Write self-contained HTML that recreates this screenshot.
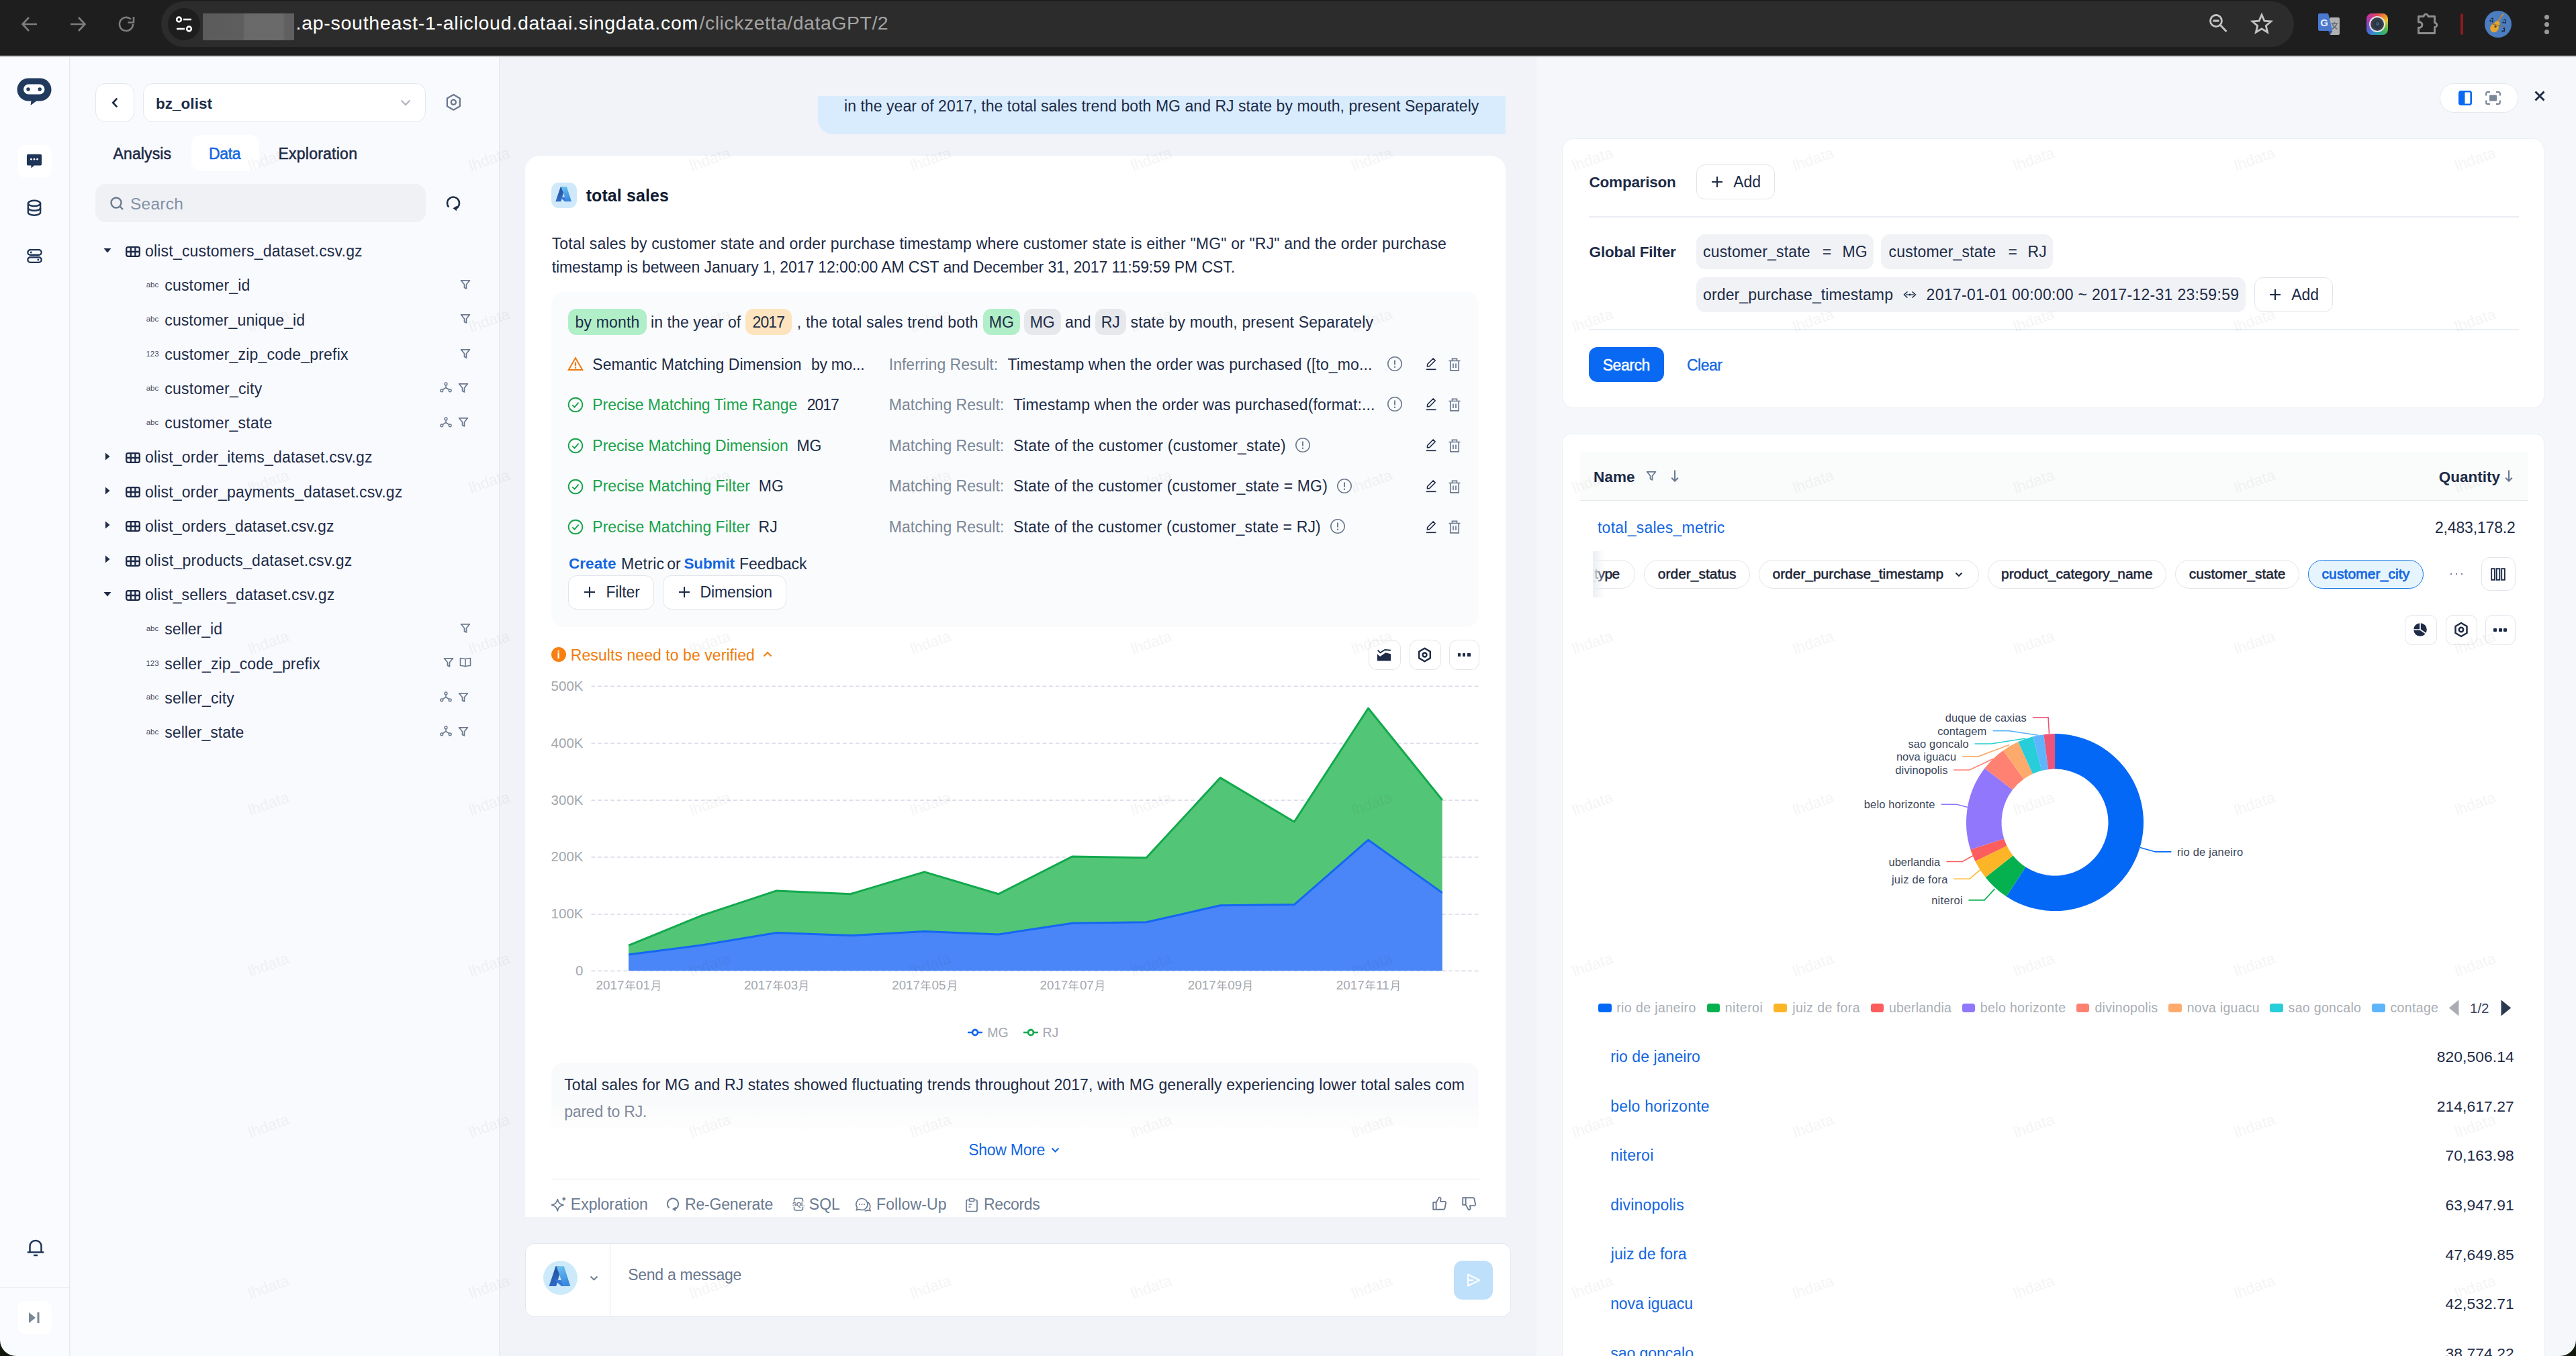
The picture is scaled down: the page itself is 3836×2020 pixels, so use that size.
<!DOCTYPE html>
<html><head><meta charset="utf-8"><title>dataGPT</title><style>
html,body{margin:0;padding:0;background:#f1f3f8;}
body{width:3836px;height:2020px;overflow:hidden;position:relative;font-family:"Liberation Sans",sans-serif;}
.t{position:absolute;white-space:nowrap;line-height:1;font-family:"Liberation Sans",sans-serif;}
.b{position:absolute;box-sizing:border-box;display:block;}
</style></head><body>
<div class="b" style="left:0.0px;top:83.0px;width:104.0px;height:1937.0px;background:#fafbfe;"></div>
<div class="b" style="left:103.2px;top:83.0px;width:1.2px;height:1937.0px;background:#e6e9ef;"></div>
<div class="b" style="left:104.5px;top:83.0px;width:638.5px;height:1937.0px;background:#f9fafe;"></div>
<div class="b" style="left:743.0px;top:83.0px;width:1.2px;height:1937.0px;background:#e4e7ec;"></div>
<div class="b" style="left:744.5px;top:83.0px;width:1543.5px;height:1937.0px;background:#f1f3f8;"></div>
<div class="b" style="left:2288.0px;top:83.0px;width:1548.0px;height:1937.0px;background:#f5f7fa;"></div>
<div class="b" style="left:0.0px;top:0.0px;width:3836.0px;height:84.0px;background:#1e1e1e;"></div>
<div class="b" style="left:0.0px;top:81.6px;width:3836.0px;height:2.4px;background:#4a4a4a;"></div>
<div class="b" style="left:0.0px;top:84.0px;width:3836.0px;height:1.2px;background:#ffffff;"></div>
<div class="b" style="left:240.0px;top:2.0px;width:3175.5px;height:68.0px;background:#2c2c2c;border-radius:34px;"></div>
<svg class="b" style="left:30.0px;top:22.0px;" width="28" height="28" viewBox="0 0 28 28"><path d="M25 14H4M13 4L3.5 14 13 24" fill="none" stroke="#7d7d7d" stroke-width="2.6"/></svg>
<svg class="b" style="left:102.0px;top:22.0px;" width="28" height="28" viewBox="0 0 28 28"><path d="M3 14H24M15 4l9.5 10L15 24" fill="none" stroke="#7d7d7d" stroke-width="2.6"/></svg>
<svg class="b" style="left:173.0px;top:21.0px;" width="30" height="30" viewBox="0 0 30 30"><path d="M25 15a10 10 0 1 1-3.2-7.4" fill="none" stroke="#7d7d7d" stroke-width="2.6"/><path d="M26 4v8.5h-8.5" fill="none" stroke="#7d7d7d" stroke-width="2.6"/></svg>
<div class="b" style="left:250.0px;top:12.0px;width:48.0px;height:48.0px;background:#1e1e1e;border-radius:24px;"></div>
<svg class="b" style="left:260.0px;top:22.0px;" width="28" height="28" viewBox="0 0 28 28"><g fill="none" stroke="#fff" stroke-width="2.6"><circle cx="6.5" cy="7" r="3.4"/><path d="M13 7h12"/><circle cx="21.5" cy="21" r="3.4"/><path d="M3 21h12"/></g></svg>
<div class="b" style="left:302.0px;top:20.0px;width:136.0px;height:40.0px;background:linear-gradient(90deg,#5b5b5b 0%,#5e5e5e 44%,#696969 46%,#6a6a6a 88%,#606060 90%,#5f5f5f 100%);"></div>
<span class="t" style="left:440.5px;top:19.7px;font-size:28.5px;color:#ffffff;letter-spacing:0.734px;">.ap-southeast-1-alicloud.dataai.singdata.com</span>
<span class="t" style="left:1041.5px;top:19.7px;font-size:28.5px;color:#a3a3a3;letter-spacing:0.515px;">/clickzetta/dataGPT/2</span>
<svg class="b" style="left:3287.0px;top:19.0px;" width="32" height="32" viewBox="0 0 32 32"><g fill="none" stroke="#c4c4c4" stroke-width="2.8"><circle cx="13" cy="12" r="8.5"/><path d="M19.5 18.5l9 9.5"/><path d="M8.5 12h9" stroke-width="3.2"/></g></svg>
<svg class="b" style="left:3351.0px;top:18.0px;" width="34" height="34" viewBox="0 0 34 34"><path d="M17 4l3.9 9.1 9.9.8-7.5 6.5 2.3 9.6L17 24.9 8.4 30l2.3-9.6-7.5-6.5 9.9-.8z" fill="none" stroke="#c4c4c4" stroke-width="2.8" stroke-linejoin="miter"/></svg>
<div class="b" style="left:3468.5px;top:25.5px;width:15.5px;height:26.5px;background:#b1b1b1;border-radius:2px;"></div>
<svg class="b" style="left:3469.8px;top:32.0px;" width="13" height="14" viewBox="0 0 13 14"><path d="M1.500 3h10M6.500 .800V3M3.200 3c1 3.600 3.700 6.500 7.300 8.300M9.800 3C8.800 6.800 5.800 9.800 1.800 11.500" fill="none" stroke="#5f6b7a" stroke-width="1.500"/></svg>
<svg class="b" style="left:3452px;top:20px" width="24" height="32" viewBox="0 0 24 32"><path d="M2 0h11.500a2 2 0 0 1 1.900 1.400L21.300 26H2a2 2 0 0 1-2-2V2a2 2 0 0 1 2-2z" fill="#4a78cf"/><path d="M15 26h6.300l-3 5.500z" fill="#3358a8"/></svg>
<span class="t" style="left:3455.3px;top:25.6px;font-size:15px;color:#e4ebfb;font-weight:700;">G</span>
<div class="b" style="left:3524.0px;top:20.0px;width:32.0px;height:32.0px;background:conic-gradient(from 0deg,#e4485a 0deg,#f08a2c 40deg,#e8c52e 70deg,#5cb84a 115deg,#2aa889 160deg,#2f8fd0 200deg,#5a5fd0 240deg,#9a3fc0 280deg,#c8358f 320deg,#e4485a 360deg);border-radius:8px;"></div>
<div class="b" style="left:3527.7px;top:23.7px;width:24.6px;height:24.6px;background:#e6e6ea;border-radius:12.3px;"></div>
<div class="b" style="left:3529.8px;top:25.8px;width:20.4px;height:20.4px;background:#3a3f4b;border-radius:10.2px;"></div>
<div class="b" style="left:3533.5px;top:29.5px;width:13.0px;height:13.0px;background:#2b3644;border-radius:6.5px;"></div>
<div class="b" style="left:3537.5px;top:33.2px;width:5.0px;height:5.0px;background:#3f6076;border-radius:2.5px;"></div>
<div class="b" style="left:3539.2px;top:33.8px;width:1.6px;height:1.6px;background:#1d2533;border-radius:0.8px;"></div>
<svg class="b" style="left:3598.5px;top:17.5px;" width="36" height="34" viewBox="0 0 36 34"><path d="M2.500 6.500h7.700a3.300 3.300 0 1 1 6.600 0h9.700v9.400a3.300 3.300 0 1 1 0 6.600v9h-24v-8.300a4.300 4.300 0 1 0 0-8.300z" fill="none" stroke="#8e8e8e" stroke-width="2.900" stroke-linejoin="round"/></svg>
<div class="b" style="left:3664.0px;top:20.0px;width:4.0px;height:32.0px;background:#8a1c1c;border-radius:2px;"></div>
<div class="b" style="left:3700.0px;top:16.0px;width:40.0px;height:40.0px;background:#4b7dc0;border-radius:20px;"></div>
<svg class="b" style="left:3700.0px;top:16.0px;" width="40" height="40" viewBox="0 0 40 40"><g><path d="M24 8l3-4 1.5 1.2-3 4z" fill="#c9962b"/><path d="M25.5 7.5L17 20" stroke="#b8862a" stroke-width="2.2"/><ellipse cx="14.5" cy="25.5" rx="6.2" ry="7" transform="rotate(35 14.5 25.5)" fill="#e3a52c"/><ellipse cx="18.5" cy="19.5" rx="4" ry="4.5" transform="rotate(35 18.5 19.5)" fill="#e3a52c"/><circle cx="16" cy="23.5" r="1.6" fill="#5a3a12"/><path d="M9 12l3-1v5M12 11" stroke="#1c2a44" stroke-width="1.2" fill="none"/><circle cx="8.5" cy="15" r="1.2" fill="#1c2a44"/><circle cx="11.5" cy="16" r="1.2" fill="#1c2a44"/><path d="M28 14l3-1v5" stroke="#1c2a44" stroke-width="1.2" fill="none"/><circle cx="27.5" cy="17.5" r="1.2" fill="#1c2a44"/><circle cx="30.5" cy="18" r="1.2" fill="#1c2a44"/><path d="M27 27l2.5-1v4" stroke="#1c2a44" stroke-width="1.2" fill="none"/><circle cx="26.5" cy="30.5" r="1.2" fill="#1c2a44"/><circle cx="29" cy="30" r="1.2" fill="#1c2a44"/><path d="M8 19l22 5" stroke="#8a6a3a" stroke-width="1"/></g></svg>
<div class="b" style="left:3788.5px;top:21.5px;width:7.0px;height:7.0px;background:#9a9a9a;border-radius:3.5px;"></div>
<div class="b" style="left:3788.5px;top:32.5px;width:7.0px;height:7.0px;background:#9a9a9a;border-radius:3.5px;"></div>
<div class="b" style="left:3788.5px;top:43.5px;width:7.0px;height:7.0px;background:#9a9a9a;border-radius:3.5px;"></div>
<svg class="b" style="left:25.0px;top:116.0px;" width="52" height="42" viewBox="0 0 52 42"><rect x=".5" y=".5" width="51" height="34" rx="17" fill="#213a5e"/><path d="M21.500 33.500L20.500 41l10-7.500z" fill="#213a5e"/><rect x="10" y="9.500" width="31.500" height="15" rx="7.500" fill="#fff"/><circle cx="17" cy="17" r="2.700" fill="#213a5e"/><circle cx="34.200" cy="17" r="2.700" fill="#213a5e"/></svg>
<div class="b" style="left:26.0px;top:216.0px;width:51.0px;height:49.0px;background:#ffffff;border-radius:12px;"></div>
<svg class="b" style="left:39.0px;top:228.3px;" width="24" height="24" viewBox="0 0 26 26"><path d="M3 2h20a2 2 0 0 1 2 2v14a2 2 0 0 1-2 2H13l-5 4.500V20H3a2 2 0 0 1-2-2V4a2 2 0 0 1 2-2z" fill="#1e3558"/><circle cx="8" cy="10" r="1.500" fill="#fff"/><circle cx="13" cy="10" r="1.500" fill="#fff"/><circle cx="18" cy="10" r="1.500" fill="#fff"/></svg>
<svg class="b" style="left:39.0px;top:297.4px;" width="24" height="25.5" viewBox="0 0 26 28"><g fill="none" stroke="#1e3558" stroke-width="2.700"><ellipse cx="13" cy="6.500" rx="10" ry="4.500"/><path d="M3 6.500v15c0 2.500 4.500 4.500 10 4.500s10-2 10-4.500v-15"/><path d="M3 14c0 2.500 4.500 4.500 10 4.500S23 16.500 23 14"/></g></svg>
<svg class="b" style="left:39.5px;top:369.8px;" width="23" height="23" viewBox="0 0 26 26"><g fill="none" stroke="#1e3558" stroke-width="2.600"><rect x="1.500" y="2.500" width="23" height="8.500" rx="4.250"/><rect x="1.500" y="15" width="23" height="8.500" rx="4.250"/></g><circle cx="7" cy="6.750" r="1.600" fill="#1e3558"/><circle cx="19" cy="19.250" r="1.600" fill="#1e3558"/></svg>
<svg class="b" style="left:39.8px;top:1843.5px;" width="26" height="28" viewBox="0 0 26 28"><g fill="none" stroke="#1e3558" stroke-width="2.500"><path d="M.800 21.500h24.400M4.500 21.500v-9a8.500 8.500 0 0 1 17 0v9"/><path d="M10 26h6"/></g></svg>
<div class="b" style="left:0.0px;top:1916.5px;width:103.0px;height:1.5px;background:#e4e7ee;"></div>
<div class="b" style="left:26.0px;top:1938.0px;width:51.0px;height:50.0px;background:#ffffff;border-radius:12px;"></div>
<svg class="b" style="left:41.3px;top:1953.5px;" width="20" height="18" viewBox="0 0 20 18"><path d="M2 1l10 8-10 8z" fill="#7a8798"/><rect x="14.500" y="1" width="3" height="16" fill="#7a8798"/></svg>
<div class="b" style="left:142.0px;top:124.0px;width:58.0px;height:58.0px;background:#fff;border-radius:15px;border:1.5px solid #e4e7ee;"></div>
<svg class="b" style="left:165.0px;top:144.0px;" width="12" height="18" viewBox="0 0 12 18"><path d="M9.300 2.600L3.200 9l6.100 6.400" fill="none" stroke="#1d2b47" stroke-width="2.700"/></svg>
<div class="b" style="left:213.0px;top:124.0px;width:421.0px;height:58.0px;background:#fff;border-radius:15px;border:1.5px solid #e4e7ee;"></div>
<span class="t" style="left:232.0px;top:143.6px;font-size:22.5px;color:#1d2b47;letter-spacing:0.027px;font-weight:700;">bz_olist</span>
<svg class="b" style="left:595.7px;top:148.0px;" width="16" height="10" viewBox="0 0 16 10"><path d="M1.500 1.500L8 8l6.500-6.500" fill="none" stroke="#b3b8c0" stroke-width="2.400"/></svg>
<svg class="b" style="left:662.9px;top:139.2px;" width="24.7" height="26.599999999999998" viewBox="0 0 26 28"><g fill="none" stroke="#6b7a90" stroke-width="2.4" stroke-linejoin="round"><path d="M13 2l10 5.800v12.400L13 26 3 20.200V7.800z"/><circle cx="13" cy="14" r="3.800"/></g></svg>
<span class="t" style="left:168.6px;top:218.1px;font-size:23px;color:#1d2b47;letter-spacing:0.104px;-webkit-text-stroke:0.55px #1d2b47;">Analysis</span>
<div class="b" style="left:285.0px;top:201.0px;width:100.5px;height:53.5px;background:#fff;border-radius:14px;"></div>
<span class="t" style="left:311.0px;top:218.1px;font-size:23px;color:#1366e0;letter-spacing:-0.348px;-webkit-text-stroke:0.55px #1366e0;">Data</span>
<span class="t" style="left:414.4px;top:218.1px;font-size:23px;color:#1d2b47;letter-spacing:0.249px;-webkit-text-stroke:0.55px #1d2b47;">Exploration</span>
<div class="b" style="left:142.0px;top:274.0px;width:492.0px;height:56.5px;background:#eff1f5;border-radius:15px;"></div>
<svg class="b" style="left:162.7px;top:292.0px;" width="22" height="22" viewBox="0 0 22 22"><g fill="none" stroke="#6b7a90" stroke-width="2.400"><circle cx="10" cy="10" r="7.500"/><path d="M15.500 15.500l4.500 4.500"/></g></svg>
<span class="t" style="left:193.9px;top:292.1px;font-size:24.5px;color:#8391a5;letter-spacing:0.287px;">Search</span>
<svg class="b" style="left:662.3px;top:289.0px;" width="26" height="26" viewBox="0 0 26 26"><g fill="none" stroke="#1d2b47" stroke-width="2.500"><path d="M6.200 19.500a9 9 0 1 1 9.800 2.600"/></g><path d="M18.500 17.500l-6 3.800 5.200 3.900z" fill="#1d2b47"/></svg>
<svg class="b" style="left:153.8px;top:368.5px;" width="12" height="8" viewBox="0 0 12 8"><path d="M.500 1h11L6 7.500z" fill="#1d2b47"/></svg>
<svg class="b" style="left:187.3px;top:366.7px;" width="22" height="16" viewBox="0 0 22 16"><g fill="none" stroke="#1d2b47" stroke-width="2.300"><rect x="1.200" y="1.200" width="19.600" height="13.600" rx="2.500"/><path d="M1.200 8h19.600M7.800 1.200v13.600M14.400 1.200v13.600"/></g></svg>
<span class="t" style="left:216.0px;top:363.1px;font-size:23px;color:#1d2b47;letter-spacing:0.198px;">olist_customers_dataset.csv.gz</span>
<span class="t" style="left:217.7px;top:419.0px;font-size:11.5px;color:#3d4a63;">abc</span>
<span class="t" style="left:245.3px;top:414.3px;font-size:23px;color:#1d2b47;letter-spacing:0.177px;">customer_id</span>
<svg class="b" style="left:685.0px;top:416.2px;" width="16" height="16" viewBox="0 0 16 16"><path d="M1.500 1.800h13l-5 6v6.200l-3-1.500V7.800z" fill="none" stroke="#6b7a90" stroke-width="1.700" stroke-linejoin="round"/></svg>
<span class="t" style="left:217.7px;top:470.2px;font-size:11.5px;color:#3d4a63;">abc</span>
<span class="t" style="left:245.3px;top:465.5px;font-size:23px;color:#1d2b47;letter-spacing:0.093px;">customer_unique_id</span>
<svg class="b" style="left:685.0px;top:467.4px;" width="16" height="16" viewBox="0 0 16 16"><path d="M1.500 1.800h13l-5 6v6.200l-3-1.500V7.800z" fill="none" stroke="#6b7a90" stroke-width="1.700" stroke-linejoin="round"/></svg>
<span class="t" style="left:217.4px;top:522.0px;font-size:11.5px;color:#3d4a63;">123</span>
<span class="t" style="left:245.3px;top:516.7px;font-size:23px;color:#1d2b47;letter-spacing:0.203px;">customer_zip_code_prefix</span>
<svg class="b" style="left:685.0px;top:518.6px;" width="16" height="16" viewBox="0 0 16 16"><path d="M1.500 1.800h13l-5 6v6.200l-3-1.500V7.800z" fill="none" stroke="#6b7a90" stroke-width="1.700" stroke-linejoin="round"/></svg>
<span class="t" style="left:217.7px;top:572.6px;font-size:11.5px;color:#3d4a63;">abc</span>
<span class="t" style="left:245.3px;top:567.9px;font-size:23px;color:#1d2b47;letter-spacing:0.258px;">customer_city</span>
<svg class="b" style="left:655.0px;top:569.3px;" width="18" height="16" viewBox="0 0 18 16"><g fill="none" stroke="#6b7a90" stroke-width="1.500"><circle cx="9" cy="3" r="1.900"/><circle cx="2.800" cy="12.800" r="1.900"/><circle cx="15.200" cy="12.800" r="1.900"/><path d="M9 5v3.500M9 8.500l-4.800 3M9 8.500l4.800 3"/></g></svg>
<svg class="b" style="left:682.0px;top:569.8px;" width="16" height="16" viewBox="0 0 16 16"><path d="M1.500 1.800h13l-5 6v6.200l-3-1.500V7.800z" fill="none" stroke="#6b7a90" stroke-width="1.700" stroke-linejoin="round"/></svg>
<span class="t" style="left:217.7px;top:623.8px;font-size:11.5px;color:#3d4a63;">abc</span>
<span class="t" style="left:245.3px;top:619.1px;font-size:23px;color:#1d2b47;letter-spacing:0.215px;">customer_state</span>
<svg class="b" style="left:655.0px;top:620.5px;" width="18" height="16" viewBox="0 0 18 16"><g fill="none" stroke="#6b7a90" stroke-width="1.500"><circle cx="9" cy="3" r="1.900"/><circle cx="2.800" cy="12.800" r="1.900"/><circle cx="15.200" cy="12.800" r="1.900"/><path d="M9 5v3.500M9 8.500l-4.800 3M9 8.500l4.800 3"/></g></svg>
<svg class="b" style="left:682.0px;top:621.0px;" width="16" height="16" viewBox="0 0 16 16"><path d="M1.500 1.800h13l-5 6v6.200l-3-1.500V7.800z" fill="none" stroke="#6b7a90" stroke-width="1.700" stroke-linejoin="round"/></svg>
<svg class="b" style="left:155.8px;top:673.7px;" width="8" height="12" viewBox="0 0 8 12"><path d="M1 .500v11L7.500 6z" fill="#1d2b47"/></svg>
<svg class="b" style="left:187.3px;top:673.9px;" width="22" height="16" viewBox="0 0 22 16"><g fill="none" stroke="#1d2b47" stroke-width="2.300"><rect x="1.200" y="1.200" width="19.600" height="13.600" rx="2.500"/><path d="M1.200 8h19.600M7.800 1.200v13.600M14.400 1.200v13.600"/></g></svg>
<span class="t" style="left:216.0px;top:670.3px;font-size:23px;color:#1d2b47;letter-spacing:0.169px;">olist_order_items_dataset.csv.gz</span>
<svg class="b" style="left:155.8px;top:724.9px;" width="8" height="12" viewBox="0 0 8 12"><path d="M1 .500v11L7.500 6z" fill="#1d2b47"/></svg>
<svg class="b" style="left:187.3px;top:725.1px;" width="22" height="16" viewBox="0 0 22 16"><g fill="none" stroke="#1d2b47" stroke-width="2.300"><rect x="1.200" y="1.200" width="19.600" height="13.600" rx="2.500"/><path d="M1.200 8h19.600M7.800 1.200v13.600M14.400 1.200v13.600"/></g></svg>
<span class="t" style="left:216.0px;top:721.5px;font-size:23px;color:#1d2b47;letter-spacing:0.156px;">olist_order_payments_dataset.csv.gz</span>
<svg class="b" style="left:155.8px;top:776.1px;" width="8" height="12" viewBox="0 0 8 12"><path d="M1 .500v11L7.500 6z" fill="#1d2b47"/></svg>
<svg class="b" style="left:187.3px;top:776.3px;" width="22" height="16" viewBox="0 0 22 16"><g fill="none" stroke="#1d2b47" stroke-width="2.300"><rect x="1.200" y="1.200" width="19.600" height="13.600" rx="2.500"/><path d="M1.200 8h19.600M7.800 1.200v13.600M14.400 1.200v13.600"/></g></svg>
<span class="t" style="left:216.0px;top:772.7px;font-size:23px;color:#1d2b47;letter-spacing:0.172px;">olist_orders_dataset.csv.gz</span>
<svg class="b" style="left:155.8px;top:827.3px;" width="8" height="12" viewBox="0 0 8 12"><path d="M1 .500v11L7.500 6z" fill="#1d2b47"/></svg>
<svg class="b" style="left:187.3px;top:827.5px;" width="22" height="16" viewBox="0 0 22 16"><g fill="none" stroke="#1d2b47" stroke-width="2.300"><rect x="1.200" y="1.200" width="19.600" height="13.600" rx="2.500"/><path d="M1.200 8h19.600M7.800 1.200v13.600M14.400 1.200v13.600"/></g></svg>
<span class="t" style="left:216.0px;top:823.9px;font-size:23px;color:#1d2b47;letter-spacing:0.295px;">olist_products_dataset.csv.gz</span>
<svg class="b" style="left:153.8px;top:880.5px;" width="12" height="8" viewBox="0 0 12 8"><path d="M.500 1h11L6 7.500z" fill="#1d2b47"/></svg>
<svg class="b" style="left:187.3px;top:878.7px;" width="22" height="16" viewBox="0 0 22 16"><g fill="none" stroke="#1d2b47" stroke-width="2.300"><rect x="1.200" y="1.200" width="19.600" height="13.600" rx="2.500"/><path d="M1.200 8h19.600M7.800 1.200v13.600M14.400 1.200v13.600"/></g></svg>
<span class="t" style="left:216.0px;top:875.1px;font-size:23px;color:#1d2b47;letter-spacing:0.148px;">olist_sellers_dataset.csv.gz</span>
<span class="t" style="left:217.7px;top:931.0px;font-size:11.5px;color:#3d4a63;">abc</span>
<span class="t" style="left:245.3px;top:926.3px;font-size:23px;color:#1d2b47;">seller_id</span>
<svg class="b" style="left:685.0px;top:928.2px;" width="16" height="16" viewBox="0 0 16 16"><path d="M1.500 1.800h13l-5 6v6.200l-3-1.500V7.800z" fill="none" stroke="#6b7a90" stroke-width="1.700" stroke-linejoin="round"/></svg>
<span class="t" style="left:217.4px;top:982.8px;font-size:11.5px;color:#3d4a63;">123</span>
<span class="t" style="left:245.3px;top:977.5px;font-size:23px;color:#1d2b47;letter-spacing:0.126px;">seller_zip_code_prefix</span>
<svg class="b" style="left:659.7px;top:979.4px;" width="16" height="16" viewBox="0 0 16 16"><path d="M1.500 1.800h13l-5 6v6.200l-3-1.500V7.800z" fill="none" stroke="#6b7a90" stroke-width="1.700" stroke-linejoin="round"/></svg>
<svg class="b" style="left:684.0px;top:979.4px;" width="18" height="16" viewBox="0 0 18 16"><g fill="none" stroke="#6b7a90" stroke-width="1.600" stroke-linejoin="round"><path d="M9 3.200C7.500 2 5 1.500 1.500 1.500v11C5 12.500 7.500 13 9 14.200 10.500 13 13 12.500 16.500 12.500v-11C13 1.500 10.500 2 9 3.200zM9 3.200v11"/></g></svg>
<span class="t" style="left:217.7px;top:1033.4px;font-size:11.5px;color:#3d4a63;">abc</span>
<span class="t" style="left:245.3px;top:1028.7px;font-size:23px;color:#1d2b47;letter-spacing:0.127px;">seller_city</span>
<svg class="b" style="left:655.0px;top:1030.1px;" width="18" height="16" viewBox="0 0 18 16"><g fill="none" stroke="#6b7a90" stroke-width="1.500"><circle cx="9" cy="3" r="1.900"/><circle cx="2.800" cy="12.800" r="1.900"/><circle cx="15.200" cy="12.800" r="1.900"/><path d="M9 5v3.500M9 8.500l-4.800 3M9 8.500l4.800 3"/></g></svg>
<svg class="b" style="left:682.0px;top:1030.6px;" width="16" height="16" viewBox="0 0 16 16"><path d="M1.500 1.800h13l-5 6v6.200l-3-1.500V7.800z" fill="none" stroke="#6b7a90" stroke-width="1.700" stroke-linejoin="round"/></svg>
<span class="t" style="left:217.7px;top:1084.6px;font-size:11.5px;color:#3d4a63;">abc</span>
<span class="t" style="left:245.3px;top:1079.9px;font-size:23px;color:#1d2b47;letter-spacing:0.032px;">seller_state</span>
<svg class="b" style="left:655.0px;top:1081.3px;" width="18" height="16" viewBox="0 0 18 16"><g fill="none" stroke="#6b7a90" stroke-width="1.500"><circle cx="9" cy="3" r="1.900"/><circle cx="2.800" cy="12.800" r="1.900"/><circle cx="15.200" cy="12.800" r="1.900"/><path d="M9 5v3.500M9 8.500l-4.800 3M9 8.500l4.800 3"/></g></svg>
<svg class="b" style="left:682.0px;top:1081.8px;" width="16" height="16" viewBox="0 0 16 16"><path d="M1.500 1.800h13l-5 6v6.200l-3-1.500V7.800z" fill="none" stroke="#6b7a90" stroke-width="1.700" stroke-linejoin="round"/></svg>
<div class="b" style="left:1218.0px;top:143.0px;width:1024.0px;height:56.5px;background:#d9ecfe;border-radius:0 0 0 22px;"></div>
<span class="t" style="left:1257.0px;top:146.7px;font-size:23px;color:#1d2b47;letter-spacing:0.048px;">in the year of 2017, the total sales trend both MG and RJ state by mouth, present Separately</span>
<div class="b" style="left:782.0px;top:232.0px;width:1460.0px;height:1581.0px;background:#fff;border-radius:22px 22px 0 0;"></div>
<div class="b" style="left:821.0px;top:272.0px;width:38.0px;height:38.0px;background:#cfe9fb;border-radius:11px;"></div>
<svg class="b" style="left:821.0px;top:272.0px;" width="38" height="38" viewBox="0 0 38 38"><defs><linearGradient id="ag291" x1="0" y1="0" x2="0.300" y2="1"><stop offset="0" stop-color="#6cc4f2"/><stop offset="1" stop-color="#3b89de"/></linearGradient><linearGradient id="ag291b" x1="0" y1="0" x2="0" y2="1"><stop offset="0" stop-color="#254f9c"/><stop offset="1" stop-color="#2f6cc6"/></linearGradient></defs><path d="M13.800 6.200h3L18.100 14.900 14.300 28.300H6.300z" fill="url(#ag291b)"/><path d="M12.900 20.900l7.400.8 2.100 6.600h-2.100l-4.700-4z" fill="#3878d6"/><path d="M14.400 6.200h8.550L30 28.200H22L17.600 14.600z" fill="url(#ag291)"/></svg>
<span class="t" style="left:872.7px;top:279.2px;font-size:25px;color:#0f1a30;letter-spacing:0.085px;font-weight:700;">total sales</span>
<span class="t" style="left:821.7px;top:352.3px;font-size:23px;color:#1d2b47;letter-spacing:0.181px;">Total sales by customer state and order purchase timestamp where customer state is either "MG" or "RJ" and the order purchase</span>
<span class="t" style="left:821.7px;top:387.3px;font-size:23px;color:#1d2b47;letter-spacing:-0.094px;">timestamp is between January 1, 2017 12:00:00 AM CST and December 31, 2017 11:59:59 PM CST.</span>
<div class="b" style="left:821.0px;top:435.0px;width:1381.0px;height:499.0px;background:#fafbfc;border-radius:18px;"></div>
<div class="b" style="left:846.0px;top:460.0px;width:116.8px;height:38.5px;background:#b1efc9;border-radius:12px;"></div>
<span class="t" style="left:856.5px;top:468.6px;font-size:23px;color:#1d2b47;letter-spacing:0.179px;">by month</span>
<span class="t" style="left:969.0px;top:468.6px;font-size:23px;color:#1d2b47;letter-spacing:0.096px;">in the year of</span>
<div class="b" style="left:1110.0px;top:460.0px;width:68.5px;height:38.5px;background:#fde4bf;border-radius:12px;"></div>
<span class="t" style="left:1120.5px;top:468.6px;font-size:23px;color:#1d2b47;letter-spacing:-0.892px;">2017</span>
<span class="t" style="left:1186.8px;top:468.6px;font-size:23px;color:#1d2b47;letter-spacing:0.188px;">, the total sales trend both</span>
<div class="b" style="left:1464.0px;top:460.0px;width:54.5px;height:38.5px;background:#b1efc9;border-radius:12px;"></div>
<span class="t" style="left:1472.8px;top:468.6px;font-size:23px;color:#1d2b47;">MG</span>
<div class="b" style="left:1525.0px;top:460.0px;width:54.6px;height:38.5px;background:#e6e8ec;border-radius:12px;"></div>
<span class="t" style="left:1533.7px;top:468.6px;font-size:23px;color:#1d2b47;">MG</span>
<span class="t" style="left:1586.1px;top:468.6px;font-size:23px;color:#1d2b47;">and</span>
<div class="b" style="left:1631.0px;top:460.0px;width:45.5px;height:38.5px;background:#e6e8ec;border-radius:12px;"></div>
<span class="t" style="left:1639.7px;top:468.6px;font-size:23px;color:#1d2b47;">RJ</span>
<span class="t" style="left:1683.5px;top:468.6px;font-size:23px;color:#1d2b47;letter-spacing:0.142px;">state by mouth, present Separately</span>
<svg class="b" style="left:845.0px;top:531.3px;" width="24" height="22" viewBox="0 0 24 22"><g fill="none" stroke="#ef7a0b" stroke-width="2"><path d="M12 2.200L22.300 20H1.700z" stroke-linejoin="miter"/><path d="M12 8.500v6" stroke-width="2.200"/></g><circle cx="12" cy="17" r="1.300" fill="#ef7a0b"/></svg>
<span class="t" style="left:882.3px;top:531.6px;font-size:23px;color:#1d2b47;letter-spacing:0.026px;">Semantic Matching Dimension</span>
<span class="t" style="left:1208.0px;top:531.6px;font-size:23px;color:#1d2b47;letter-spacing:-0.324px;">by mo...</span>
<span class="t" style="left:1323.8px;top:531.6px;font-size:23px;color:#7a8798;">Inferring Result:</span>
<span class="t" style="left:1500.4px;top:531.6px;font-size:23px;color:#1d2b47;letter-spacing:0.117px;">Timestamp when the order was purchased ([to_mo...</span>
<svg class="b" style="left:2064.7px;top:529.8px;" width="24" height="24" viewBox="0 0 24 24"><g fill="none" stroke="#6b7a90" stroke-width="1.600"><circle cx="12" cy="12" r="10.200"/><path d="M12 6.500v7" stroke-width="1.900"/></g><circle cx="12" cy="16.800" r="1.200" fill="#6b7a90"/></svg>
<svg class="b" style="left:2121.7px;top:532.3px;" width="18" height="20" viewBox="0 0 18 20"><g fill="none" stroke="#1d2b47" stroke-width="1.700" stroke-linejoin="round"><path d="M3.500 13.800l.2-3.300L12.200 2l3 3-8.500 8.500z"/><path d="M2 18.300h14.500"/></g></svg>
<svg class="b" style="left:2156.0px;top:531.8px;" width="20" height="22" viewBox="0 0 20 22"><g fill="none" stroke="#6b7a90" stroke-width="1.700"><path d="M1.500 5.500h17M6.500 5.200V2.300h7v2.900M3.800 5.500v14.300h12.400V5.500M8 9.500v6.500M12 9.500v6.500"/></g></svg>
<svg class="b" style="left:845.0px;top:590.9px;" width="24" height="24" viewBox="0 0 24 24"><g fill="none" stroke="#17a34a" stroke-width="1.900"><circle cx="12" cy="12" r="10.300"/><path d="M7.300 12.300l3.300 3.400 6-7"/></g></svg>
<span class="t" style="left:882.3px;top:591.7px;font-size:23px;color:#17a34a;letter-spacing:-0.070px;">Precise Matching Time Range</span>
<span class="t" style="left:1201.7px;top:591.7px;font-size:23px;color:#1d2b47;letter-spacing:-1.058px;">2017</span>
<span class="t" style="left:1323.8px;top:591.7px;font-size:23px;color:#7a8798;letter-spacing:0.010px;">Matching Result:</span>
<span class="t" style="left:1509.0px;top:591.7px;font-size:23px;color:#1d2b47;letter-spacing:0.129px;">Timestamp when the order was purchased(format:...</span>
<svg class="b" style="left:2064.7px;top:589.9px;" width="24" height="24" viewBox="0 0 24 24"><g fill="none" stroke="#6b7a90" stroke-width="1.600"><circle cx="12" cy="12" r="10.200"/><path d="M12 6.500v7" stroke-width="1.900"/></g><circle cx="12" cy="16.800" r="1.200" fill="#6b7a90"/></svg>
<svg class="b" style="left:2121.7px;top:592.4px;" width="18" height="20" viewBox="0 0 18 20"><g fill="none" stroke="#1d2b47" stroke-width="1.700" stroke-linejoin="round"><path d="M3.500 13.800l.2-3.300L12.200 2l3 3-8.500 8.500z"/><path d="M2 18.300h14.500"/></g></svg>
<svg class="b" style="left:2156.0px;top:591.9px;" width="20" height="22" viewBox="0 0 20 22"><g fill="none" stroke="#6b7a90" stroke-width="1.700"><path d="M1.500 5.500h17M6.500 5.200V2.300h7v2.900M3.800 5.500v14.300h12.400V5.500M8 9.500v6.500M12 9.500v6.500"/></g></svg>
<svg class="b" style="left:845.0px;top:651.7px;" width="24" height="24" viewBox="0 0 24 24"><g fill="none" stroke="#17a34a" stroke-width="1.900"><circle cx="12" cy="12" r="10.300"/><path d="M7.300 12.300l3.300 3.400 6-7"/></g></svg>
<span class="t" style="left:882.3px;top:652.5px;font-size:23px;color:#17a34a;">Precise Matching Dimension</span>
<span class="t" style="left:1186.4px;top:652.5px;font-size:23px;color:#1d2b47;">MG</span>
<span class="t" style="left:1323.8px;top:652.5px;font-size:23px;color:#7a8798;letter-spacing:0.010px;">Matching Result:</span>
<span class="t" style="left:1509.0px;top:652.5px;font-size:23px;color:#1d2b47;letter-spacing:0.220px;">State of the customer (customer_state)</span>
<svg class="b" style="left:1928.0px;top:650.7px;" width="24" height="24" viewBox="0 0 24 24"><g fill="none" stroke="#6b7a90" stroke-width="1.600"><circle cx="12" cy="12" r="10.200"/><path d="M12 6.500v7" stroke-width="1.900"/></g><circle cx="12" cy="16.800" r="1.200" fill="#6b7a90"/></svg>
<svg class="b" style="left:2121.7px;top:653.2px;" width="18" height="20" viewBox="0 0 18 20"><g fill="none" stroke="#1d2b47" stroke-width="1.700" stroke-linejoin="round"><path d="M3.500 13.800l.2-3.300L12.200 2l3 3-8.500 8.500z"/><path d="M2 18.300h14.500"/></g></svg>
<svg class="b" style="left:2156.0px;top:652.7px;" width="20" height="22" viewBox="0 0 20 22"><g fill="none" stroke="#6b7a90" stroke-width="1.700"><path d="M1.500 5.500h17M6.500 5.200V2.300h7v2.900M3.800 5.500v14.300h12.400V5.500M8 9.500v6.500M12 9.500v6.500"/></g></svg>
<svg class="b" style="left:845.0px;top:712.5px;" width="24" height="24" viewBox="0 0 24 24"><g fill="none" stroke="#17a34a" stroke-width="1.900"><circle cx="12" cy="12" r="10.300"/><path d="M7.300 12.300l3.300 3.400 6-7"/></g></svg>
<span class="t" style="left:882.3px;top:713.3px;font-size:23px;color:#17a34a;letter-spacing:0.031px;">Precise Matching Filter</span>
<span class="t" style="left:1129.8px;top:713.3px;font-size:23px;color:#1d2b47;">MG</span>
<span class="t" style="left:1323.8px;top:713.3px;font-size:23px;color:#7a8798;letter-spacing:0.010px;">Matching Result:</span>
<span class="t" style="left:1509.0px;top:713.3px;font-size:23px;color:#1d2b47;letter-spacing:0.167px;">State of the customer (customer_state = MG)</span>
<svg class="b" style="left:1989.5px;top:711.5px;" width="24" height="24" viewBox="0 0 24 24"><g fill="none" stroke="#6b7a90" stroke-width="1.600"><circle cx="12" cy="12" r="10.200"/><path d="M12 6.500v7" stroke-width="1.900"/></g><circle cx="12" cy="16.800" r="1.200" fill="#6b7a90"/></svg>
<svg class="b" style="left:2121.7px;top:714.0px;" width="18" height="20" viewBox="0 0 18 20"><g fill="none" stroke="#1d2b47" stroke-width="1.700" stroke-linejoin="round"><path d="M3.500 13.800l.2-3.300L12.200 2l3 3-8.500 8.500z"/><path d="M2 18.300h14.500"/></g></svg>
<svg class="b" style="left:2156.0px;top:713.5px;" width="20" height="22" viewBox="0 0 20 22"><g fill="none" stroke="#6b7a90" stroke-width="1.700"><path d="M1.500 5.500h17M6.500 5.200V2.300h7v2.900M3.800 5.500v14.300h12.400V5.500M8 9.500v6.500M12 9.500v6.500"/></g></svg>
<svg class="b" style="left:845.0px;top:773.3px;" width="24" height="24" viewBox="0 0 24 24"><g fill="none" stroke="#17a34a" stroke-width="1.900"><circle cx="12" cy="12" r="10.300"/><path d="M7.300 12.300l3.300 3.400 6-7"/></g></svg>
<span class="t" style="left:882.3px;top:774.1px;font-size:23px;color:#17a34a;letter-spacing:0.031px;">Precise Matching Filter</span>
<span class="t" style="left:1129.6px;top:774.1px;font-size:23px;color:#1d2b47;">RJ</span>
<span class="t" style="left:1323.8px;top:774.1px;font-size:23px;color:#7a8798;letter-spacing:0.010px;">Matching Result:</span>
<span class="t" style="left:1509.0px;top:774.1px;font-size:23px;color:#1d2b47;letter-spacing:0.140px;">State of the customer (customer_state = RJ)</span>
<svg class="b" style="left:1980.0px;top:772.3px;" width="24" height="24" viewBox="0 0 24 24"><g fill="none" stroke="#6b7a90" stroke-width="1.600"><circle cx="12" cy="12" r="10.200"/><path d="M12 6.500v7" stroke-width="1.900"/></g><circle cx="12" cy="16.800" r="1.200" fill="#6b7a90"/></svg>
<svg class="b" style="left:2121.7px;top:774.8px;" width="18" height="20" viewBox="0 0 18 20"><g fill="none" stroke="#1d2b47" stroke-width="1.700" stroke-linejoin="round"><path d="M3.500 13.800l.2-3.300L12.200 2l3 3-8.500 8.500z"/><path d="M2 18.300h14.500"/></g></svg>
<svg class="b" style="left:2156.0px;top:774.3px;" width="20" height="22" viewBox="0 0 20 22"><g fill="none" stroke="#6b7a90" stroke-width="1.700"><path d="M1.500 5.500h17M6.500 5.200V2.300h7v2.900M3.800 5.500v14.300h12.400V5.500M8 9.500v6.500M12 9.500v6.500"/></g></svg>
<span class="t" style="left:846.9px;top:829.4px;font-size:22.5px;color:#1366e0;letter-spacing:0.103px;font-weight:700;">Create</span>
<span class="t" style="left:925.0px;top:828.9px;font-size:23px;color:#1d2b47;letter-spacing:0.288px;">Metric</span>
<span class="t" style="left:993.3px;top:828.9px;font-size:23px;color:#1d2b47;">or</span>
<span class="t" style="left:1018.5px;top:829.4px;font-size:22.5px;color:#1366e0;letter-spacing:-0.155px;font-weight:700;">Submit</span>
<span class="t" style="left:1101.0px;top:828.9px;font-size:23px;color:#1d2b47;letter-spacing:-0.069px;">Feedback</span>
<div class="b" style="left:845.8px;top:857.0px;width:128.0px;height:51.0px;background:#fff;border-radius:13px;border:1.5px solid #e1e5eb;"></div>
<svg class="b" style="left:869.0px;top:872.8px;" width="18" height="18" viewBox="0 0 18 18"><path d="M9.0 1v16M1 9.0h16" stroke="#1d2b47" stroke-width="2"/></svg>
<span class="t" style="left:902.4px;top:871.3px;font-size:23px;color:#1d2b47;letter-spacing:-0.132px;">Filter</span>
<div class="b" style="left:986.5px;top:857.0px;width:184.3px;height:51.0px;background:#fff;border-radius:13px;border:1.5px solid #e1e5eb;"></div>
<svg class="b" style="left:1009.8px;top:872.8px;" width="18" height="18" viewBox="0 0 18 18"><path d="M9.0 1v16M1 9.0h16" stroke="#1d2b47" stroke-width="2"/></svg>
<span class="t" style="left:1042.6px;top:871.3px;font-size:23px;color:#1d2b47;letter-spacing:-0.159px;">Dimension</span>
<div class="b" style="left:820.7px;top:964.0px;width:22.0px;height:22.0px;background:#f97f0f;border-radius:11px;"></div>
<span class="t" style="left:829.6px;top:967.8px;font-size:16px;color:#fff;font-weight:700;">i</span>
<span class="t" style="left:849.8px;top:964.8px;font-size:23px;color:#f07c0a;letter-spacing:0.068px;">Results need to be verified</span>
<svg class="b" style="left:1135.6px;top:970.0px;" width="14" height="9" viewBox="0 0 14 9"><path d="M1.500 7.500L7 2l5.500 5.500" fill="none" stroke="#f07c0a" stroke-width="2"/></svg>
<div class="b" style="left:2038.3px;top:952.8px;width:47.5px;height:45.2px;background:#fff;border-radius:12px;border:1.5px solid #e1e5eb;"></div>
<div class="b" style="left:2099.0px;top:952.8px;width:47.0px;height:45.2px;background:#fff;border-radius:12px;border:1.5px solid #e1e5eb;"></div>
<div class="b" style="left:2158.0px;top:952.8px;width:45.0px;height:45.2px;background:#fff;border-radius:12px;border:1.5px solid #e1e5eb;"></div>
<svg class="b" style="left:2051.2px;top:966.8px;" width="20" height="18" viewBox="0 0 20 18"><path d="M0.600 1.600L4.300 5.400 11.300 1 19.800 1.800" fill="none" stroke="#1d2b47" stroke-width="1.900"/><path d="M0 7.300L4.200 10.900 12.300 5.300 20 7.300V17.600H0z" fill="#1d2b47"/></svg>
<svg class="b" style="left:2111.3px;top:963.5px;" width="21" height="23" viewBox="0 0 21 23"><g fill="none" stroke="#1d2b47" stroke-width="2.400" stroke-linejoin="round"><path d="M10.500 1.800l8.300 4.850v9.700L10.500 21.200 2.200 16.350v-9.700z"/><circle cx="10.500" cy="11.500" r="3"/></g></svg>
<div class="b" style="left:2170.6px;top:973.2px;width:4.4px;height:4.8px;background:#1d2b47;border-radius:0.5px;"></div>
<div class="b" style="left:2178.0px;top:973.2px;width:4.4px;height:4.8px;background:#1d2b47;border-radius:0.5px;"></div>
<div class="b" style="left:2185.4px;top:973.2px;width:4.4px;height:4.8px;background:#1d2b47;border-radius:0.5px;"></div>
<span class="t" style="left:820.6px;top:1011.9px;font-size:20.5px;color:#a3a7ae;">500K</span>
<span class="t" style="left:820.6px;top:1096.9px;font-size:20.5px;color:#a3a7ae;">400K</span>
<span class="t" style="left:820.6px;top:1181.8px;font-size:20.5px;color:#a3a7ae;">300K</span>
<span class="t" style="left:820.6px;top:1266.4px;font-size:20.5px;color:#a3a7ae;">200K</span>
<span class="t" style="left:820.6px;top:1351.4px;font-size:20.5px;color:#a3a7ae;">100K</span>
<span class="t" style="left:857.1px;top:1436.0px;font-size:20.5px;color:#a3a7ae;">0</span>
<svg class="b" style="left:0;top:0" width="2300" height="1500" viewBox="0 0 2300 1500"><path d="M880.500 1022.3H2202.500" stroke="#dcdde9" stroke-width="1.800" stroke-dasharray="5.800 3.800"/><path d="M880.500 1107.3H2202.500" stroke="#dcdde9" stroke-width="1.800" stroke-dasharray="5.800 3.800"/><path d="M880.500 1192.2H2202.500" stroke="#dcdde9" stroke-width="1.800" stroke-dasharray="5.800 3.800"/><path d="M880.500 1276.8H2202.500" stroke="#dcdde9" stroke-width="1.800" stroke-dasharray="5.800 3.800"/><path d="M880.500 1361.8H2202.500" stroke="#dcdde9" stroke-width="1.800" stroke-dasharray="5.800 3.800"/><path d="M880.500 1446.4H2202.500" stroke="#dcdde9" stroke-width="1.800" stroke-dasharray="5.800 3.800"/><polygon points="936.0,1446 936.0,1408.3 1046.2,1363.3 1156.3,1326.9 1266.5,1331.8 1376.6,1298.9 1486.8,1331.8 1596.9,1275.9 1707.1,1277.7 1817.2,1158.6 1927.3,1224.3 2037.5,1055.0 2147.7,1191.8 2147.7,1446" fill="#53c577"/><polyline points="936.0,1408.3 1046.2,1363.3 1156.3,1326.9 1266.5,1331.8 1376.6,1298.9 1486.8,1331.8 1596.9,1275.9 1707.1,1277.7 1817.2,1158.6 1927.3,1224.3 2037.5,1055.0 2147.7,1191.8" fill="none" stroke="#12a94d" stroke-width="3" stroke-linejoin="round"/><polygon points="936.0,1446 936.0,1422.0 1046.2,1407.8 1156.3,1389.4 1266.5,1393.6 1376.6,1387.6 1486.8,1391.9 1596.9,1375.2 1707.1,1373.8 1817.2,1348.7 1927.3,1347.6 2037.5,1251.3 2147.7,1329.9 2147.7,1446" fill="#4a86f7"/><polyline points="936.0,1422.0 1046.2,1407.8 1156.3,1389.4 1266.5,1393.6 1376.6,1387.6 1486.8,1391.9 1596.9,1375.2 1707.1,1373.8 1817.2,1348.7 1927.3,1347.6 2037.5,1251.3 2147.7,1329.9" fill="none" stroke="#1467f2" stroke-width="3" stroke-linejoin="round"/></svg>
<span class="t" style="left:887.6px;top:1459.1px;font-size:18.8px;color:#a3a7ae;">2017</span>
<svg class="b" style="left:929.5px;top:1458.8px;" width="17.5" height="17.5" viewBox="0 0 20 20"><g fill="none" stroke="#a3a7ae" stroke-width="1.500"><path d="M6.500 1.500C5.500 4.500 4 6.800 2 8.500M5.500 4.500H17M5 9.500h11.500M5 9.500v5M1.500 14.500H18.500M11 4.500V19"/></g></svg>
<span class="t" style="left:947.0px;top:1459.1px;font-size:18.8px;color:#a3a7ae;">01</span>
<svg class="b" style="left:967.9px;top:1458.8px;" width="17.5" height="17.5" viewBox="0 0 20 20"><g fill="none" stroke="#a3a7ae" stroke-width="1.500"><path d="M5.500 2.500H15.500V17.500c0 1-.5 1.500-2.500 1.300M5.500 2.500V11c0 3.500-1 6-3 8M5.500 7.500h10M5.500 12.500h10"/></g></svg>
<span class="t" style="left:1107.9px;top:1459.1px;font-size:18.8px;color:#a3a7ae;">2017</span>
<svg class="b" style="left:1149.8px;top:1458.8px;" width="17.5" height="17.5" viewBox="0 0 20 20"><g fill="none" stroke="#a3a7ae" stroke-width="1.500"><path d="M6.500 1.500C5.500 4.500 4 6.800 2 8.500M5.500 4.500H17M5 9.500h11.500M5 9.500v5M1.500 14.500H18.500M11 4.500V19"/></g></svg>
<span class="t" style="left:1167.3px;top:1459.1px;font-size:18.8px;color:#a3a7ae;">03</span>
<svg class="b" style="left:1188.2px;top:1458.8px;" width="17.5" height="17.5" viewBox="0 0 20 20"><g fill="none" stroke="#a3a7ae" stroke-width="1.500"><path d="M5.500 2.500H15.500V17.500c0 1-.5 1.500-2.500 1.300M5.500 2.500V11c0 3.500-1 6-3 8M5.500 7.500h10M5.500 12.500h10"/></g></svg>
<span class="t" style="left:1328.2px;top:1459.1px;font-size:18.8px;color:#a3a7ae;">2017</span>
<svg class="b" style="left:1370.1px;top:1458.8px;" width="17.5" height="17.5" viewBox="0 0 20 20"><g fill="none" stroke="#a3a7ae" stroke-width="1.500"><path d="M6.500 1.500C5.500 4.500 4 6.800 2 8.500M5.500 4.500H17M5 9.500h11.500M5 9.500v5M1.500 14.500H18.500M11 4.500V19"/></g></svg>
<span class="t" style="left:1387.6px;top:1459.1px;font-size:18.8px;color:#a3a7ae;">05</span>
<svg class="b" style="left:1408.5px;top:1458.8px;" width="17.5" height="17.5" viewBox="0 0 20 20"><g fill="none" stroke="#a3a7ae" stroke-width="1.500"><path d="M5.500 2.500H15.500V17.500c0 1-.5 1.500-2.500 1.300M5.500 2.500V11c0 3.500-1 6-3 8M5.500 7.500h10M5.500 12.500h10"/></g></svg>
<span class="t" style="left:1548.5px;top:1459.1px;font-size:18.8px;color:#a3a7ae;">2017</span>
<svg class="b" style="left:1590.4px;top:1458.8px;" width="17.5" height="17.5" viewBox="0 0 20 20"><g fill="none" stroke="#a3a7ae" stroke-width="1.500"><path d="M6.500 1.500C5.500 4.500 4 6.800 2 8.500M5.500 4.500H17M5 9.500h11.500M5 9.500v5M1.500 14.500H18.500M11 4.500V19"/></g></svg>
<span class="t" style="left:1607.9px;top:1459.1px;font-size:18.8px;color:#a3a7ae;">07</span>
<svg class="b" style="left:1628.8px;top:1458.8px;" width="17.5" height="17.5" viewBox="0 0 20 20"><g fill="none" stroke="#a3a7ae" stroke-width="1.500"><path d="M5.500 2.500H15.500V17.500c0 1-.5 1.500-2.500 1.300M5.500 2.500V11c0 3.500-1 6-3 8M5.500 7.500h10M5.500 12.500h10"/></g></svg>
<span class="t" style="left:1768.8px;top:1459.1px;font-size:18.8px;color:#a3a7ae;">2017</span>
<svg class="b" style="left:1810.7px;top:1458.8px;" width="17.5" height="17.5" viewBox="0 0 20 20"><g fill="none" stroke="#a3a7ae" stroke-width="1.500"><path d="M6.500 1.500C5.500 4.500 4 6.800 2 8.500M5.500 4.500H17M5 9.500h11.500M5 9.500v5M1.500 14.500H18.500M11 4.500V19"/></g></svg>
<span class="t" style="left:1828.2px;top:1459.1px;font-size:18.8px;color:#a3a7ae;">09</span>
<svg class="b" style="left:1849.1px;top:1458.8px;" width="17.5" height="17.5" viewBox="0 0 20 20"><g fill="none" stroke="#a3a7ae" stroke-width="1.500"><path d="M5.500 2.500H15.500V17.500c0 1-.5 1.500-2.500 1.300M5.500 2.500V11c0 3.500-1 6-3 8M5.500 7.500h10M5.500 12.500h10"/></g></svg>
<span class="t" style="left:1989.8px;top:1459.1px;font-size:18.8px;color:#a3a7ae;">2017</span>
<svg class="b" style="left:2031.7px;top:1458.8px;" width="17.5" height="17.5" viewBox="0 0 20 20"><g fill="none" stroke="#a3a7ae" stroke-width="1.500"><path d="M6.500 1.500C5.500 4.500 4 6.800 2 8.500M5.500 4.500H17M5 9.500h11.500M5 9.500v5M1.500 14.500H18.500M11 4.500V19"/></g></svg>
<span class="t" style="left:2049.2px;top:1459.1px;font-size:18.8px;color:#a3a7ae;">11</span>
<svg class="b" style="left:2068.7px;top:1458.8px;" width="17.5" height="17.5" viewBox="0 0 20 20"><g fill="none" stroke="#a3a7ae" stroke-width="1.500"><path d="M5.500 2.500H15.500V17.500c0 1-.5 1.500-2.500 1.300M5.500 2.500V11c0 3.500-1 6-3 8M5.500 7.500h10M5.500 12.500h10"/></g></svg>
<svg class="b" style="left:1441.4px;top:1532.4px;" width="22" height="12" viewBox="0 0 22 12"><path d="M0 6h22" stroke="#1467f2" stroke-width="2.500"/><circle cx="11" cy="6" r="4" fill="#fff" stroke="#1467f2" stroke-width="2.800"/></svg>
<span class="t" style="left:1470.3px;top:1528.7px;font-size:19.5px;color:#a3a7ae;">MG</span>
<svg class="b" style="left:1524.2px;top:1532.4px;" width="22" height="12" viewBox="0 0 22 12"><path d="M0 6h22" stroke="#12a94d" stroke-width="2.500"/><circle cx="11" cy="6" r="4" fill="#fff" stroke="#12a94d" stroke-width="2.800"/></svg>
<span class="t" style="left:1552.4px;top:1528.7px;font-size:19.5px;color:#a3a7ae;">RJ</span>
<div class="b" style="left:821.0px;top:1583.3px;width:1381.0px;height:106.7px;background:linear-gradient(180deg,#f9fafb 0%,#f9fafb 55%,rgba(255,255,255,1) 100%);border-radius:18px 18px 0 0;"></div>
<span class="t" style="left:840.2px;top:1605.0px;font-size:23px;color:#1d2b47;letter-spacing:0.098px;">Total sales for MG and RJ states showed fluctuating trends throughout 2017, with MG generally experiencing lower total sales com</span>
<span class="t" style="left:840.2px;top:1645.2px;font-size:23px;color:#7f8a9b;letter-spacing:-0.185px;">pared to RJ.</span>
<span class="t" style="left:1442.3px;top:1701.5px;font-size:23px;color:#1366e0;letter-spacing:-0.285px;">Show More</span>
<svg class="b" style="left:1564.5px;top:1709.0px;" width="13" height="9" viewBox="0 0 13 9"><path d="M1.500 1.500L6.500 6.500l5-5" fill="none" stroke="#1366e0" stroke-width="2"/></svg>
<div class="b" style="left:821.0px;top:1755.7px;width:1382.0px;height:1.5px;background:#e6e8ec;"></div>
<span class="t" style="left:849.8px;top:1782.8px;font-size:23px;color:#6b7a90;">Exploration</span>
<span class="t" style="left:1020.0px;top:1782.8px;font-size:23px;color:#6b7a90;letter-spacing:-0.174px;">Re-Generate</span>
<span class="t" style="left:1204.8px;top:1782.8px;font-size:23px;color:#6b7a90;">SQL</span>
<span class="t" style="left:1305.0px;top:1782.8px;font-size:23px;color:#6b7a90;letter-spacing:0.125px;">Follow-Up</span>
<span class="t" style="left:1465.0px;top:1782.8px;font-size:23px;color:#6b7a90;letter-spacing:-0.313px;">Records</span>
<svg class="b" style="left:821.0px;top:1781.0px;" width="28" height="26" viewBox="0 0 28 26"><path d="M9.200 5.600c1.300 5.400 3.200 7.300 8.700 8.600-5.500 1.300-7.400 3.200-8.700 8.700-1.300-5.500-3.200-7.400-8.700-8.700 5.500-1.300 7.400-3.200 8.700-8.600z" fill="none" stroke="#6b7a90" stroke-width="1.800" stroke-linejoin="round"/><path d="M18.800 1.200c.6 2.500 1.300 3.200 3.700 3.800-2.400.6-3.100 1.300-3.700 3.800-.6-2.500-1.300-3.200-3.700-3.800 2.400-.6 3.100-1.300 3.700-3.800z" fill="#6b7a90"/></svg>
<svg class="b" style="left:991.3px;top:1782.3px;" width="22" height="24" viewBox="0 0 22 24"><g fill="none" stroke="#6b7a90" stroke-width="1.900"><path d="M5.500 17.500a8.200 8.200 0 1 1 8 1.800"/></g><path d="M15.500 15.500l-5.500 3.500 4.800 3.600z" fill="#6b7a90"/></svg>
<svg class="b" style="left:1176.5px;top:1782.0px;" width="24" height="24" viewBox="0 0 24 24"><g fill="none" stroke="#6b7a90" stroke-width="1.600"><path d="M5.500 8V6a3 3 0 0 1 3-3h7a3 3 0 0 1 3 3v2M18.500 16v2a3 3 0 0 1-3 3h-7a3 3 0 0 1-3-3v-2"/></g><text x="12" y="15.300" font-family="Liberation Sans,sans-serif" font-size="9.500" font-weight="700" text-anchor="middle" fill="#6b7a90" letter-spacing="-.3">SQL</text></svg>
<svg class="b" style="left:1273.0px;top:1783.0px;" width="26" height="24" viewBox="0 0 26 24"><g fill="none" stroke="#6b7a90" stroke-width="1.700"><path d="M10.500 2.500a8.500 8.500 0 0 1 0 17c-1.500 0-2.800-.3-4-.9L2.500 19.500l1-3.600A8.500 8.500 0 0 1 10.500 2.500z"/><path d="M19.500 8a7.500 7.500 0 0 1 2.500 9.500l.8 3-3.200-.8a7.500 7.500 0 0 1-5 .9"/></g><circle cx="7" cy="11" r="1" fill="#6b7a90"/><circle cx="10.500" cy="11" r="1" fill="#6b7a90"/><circle cx="14" cy="11" r="1" fill="#6b7a90"/></svg>
<svg class="b" style="left:1436.9px;top:1783.5px;" width="20" height="22" viewBox="0 0 20 22"><g fill="none" stroke="#6b7a90" stroke-width="1.700"><rect x="2" y="3.500" width="16" height="17" rx="2"/><rect x="6.500" y="1.500" width="7" height="4" rx="1" fill="#fff"/><path d="M5.500 10h5M5.500 14h3"/></g></svg>
<svg class="b" style="left:2131.5px;top:1780.9px;" width="23" height="23" viewBox="0 0 26 26"><g fill="none" stroke="#6b7a90" stroke-width="2.100" stroke-linejoin="round"><path d="M2.500 11.500h5v12h-5zM7.500 11.500l5-8.500c2 0 3.200 1.300 2.800 3.300L14.500 10h7.200c1.500 0 2.400 1.200 2.100 2.700l-1.700 8.500c-.3 1.400-1.300 2.300-2.800 2.300H7.500"/></g></svg>
<svg class="b" style="left:2175.5px;top:1781.5px;" width="23" height="23" viewBox="0 0 26 26"><g fill="none" stroke="#6b7a90" stroke-width="2.100" stroke-linejoin="round" transform="translate(0 26) scale(1 -1)"><path d="M2.500 11.500h5v12h-5zM7.500 11.500l5-8.500c2 0 3.200 1.300 2.800 3.300L14.500 10h7.200c1.500 0 2.400 1.200 2.100 2.700l-1.700 8.500c-.3 1.400-1.300 2.300-2.800 2.300H7.500"/></g></svg>
<div class="b" style="left:782.0px;top:1852.0px;width:1467.5px;height:109.5px;background:#fff;border-radius:14px;border:1.5px solid #e4e7ee;"></div>
<div class="b" style="left:809.0px;top:1878.0px;width:51.0px;height:51.0px;background:#cdeafb;border-radius:25.5px;"></div>
<svg class="b" style="left:808.8px;top:1878.0px;" width="51.1" height="51.1" viewBox="0 0 38 38"><defs><linearGradient id="ag1903" x1="0" y1="0" x2="0.300" y2="1"><stop offset="0" stop-color="#6cc4f2"/><stop offset="1" stop-color="#3b89de"/></linearGradient><linearGradient id="ag1903b" x1="0" y1="0" x2="0" y2="1"><stop offset="0" stop-color="#254f9c"/><stop offset="1" stop-color="#2f6cc6"/></linearGradient></defs><path d="M13.800 6.200h3L18.100 14.900 14.300 28.300H6.300z" fill="url(#ag1903b)"/><path d="M12.900 20.900l7.400.8 2.100 6.600h-2.100l-4.700-4z" fill="#3878d6"/><path d="M14.400 6.200h8.550L30 28.200H22L17.600 14.600z" fill="url(#ag1903)"/></svg>
<svg class="b" style="left:877.5px;top:1899.8px;" width="13" height="9" viewBox="0 0 13 9"><path d="M1.500 1.500L6.500 6.500l5-5" fill="none" stroke="#68778d" stroke-width="1.800"/></svg>
<div class="b" style="left:908.2px;top:1853.0px;width:1.2px;height:107.5px;background:#e4e7ee;"></div>
<span class="t" style="left:935.2px;top:1888.0px;font-size:23px;color:#68778d;letter-spacing:-0.270px;">Send a message</span>
<div class="b" style="left:2165.0px;top:1878.0px;width:58.0px;height:57.5px;background:#bfe0fb;border-radius:13px;"></div>
<svg class="b" style="left:2183.0px;top:1894.5px;" width="22" height="24" viewBox="0 0 22 24"><g fill="none" stroke="#fff" stroke-width="2" stroke-linejoin="round"><path d="M3 3.500l17 8.500-17 8.500zM3 12h8"/></g></svg>
<div class="b" style="left:3633.0px;top:124.0px;width:116.7px;height:44.0px;background:#fff;border-radius:21.5px;border:1.5px solid #e4e7ee;"></div>
<svg class="b" style="left:3661.3px;top:135.0px;" width="20" height="22" viewBox="0 0 20 22"><rect x="1.300" y="1.300" width="17.400" height="19.400" rx="2.500" fill="#fff" stroke="#0969f2" stroke-width="2.600"/><path d="M2 3a1.500 1.500 0 0 1 1.500-1.500H9.500v19H3.500A1.500 1.500 0 0 1 2 19z" fill="#0969f2"/></svg>
<svg class="b" style="left:3700.5px;top:136.3px;" width="23" height="20" viewBox="0 0 23 20"><g fill="none" stroke="#7a8798" stroke-width="2.200"><path d="M1.200 6.500V3a1.800 1.800 0 0 1 1.800-1.800H7M16 1.200h4A1.800 1.800 0 0 1 21.800 3v3.500M21.800 13.500V17a1.800 1.800 0 0 1-1.800 1.800H16M7 18.800H3A1.800 1.800 0 0 1 1.200 17v-3.500"/></g><rect x="6" y="5.500" width="11" height="9" rx="1" fill="#7a8798"/></svg>
<svg class="b" style="left:3773.0px;top:134.3px;" width="18" height="18" viewBox="0 0 18 18"><path d="M2.500 2.500l13 13M15.500 2.500l-13 13" stroke="#1d2b47" stroke-width="2.900"/></svg>
<div class="b" style="left:2325.8px;top:205.5px;width:1463.7px;height:402.3px;background:#fff;border-radius:18px;border:1px solid #eceff3;"></div>
<span class="t" style="left:2366.6px;top:261.3px;font-size:22.5px;color:#1d2b47;letter-spacing:-0.232px;font-weight:700;">Comparison</span>
<div class="b" style="left:2526.0px;top:245.0px;width:116.8px;height:52.0px;background:#fff;border-radius:13px;border:1.5px solid #e1e5eb;"></div>
<svg class="b" style="left:2548.0px;top:261.8px;" width="18" height="18" viewBox="0 0 18 18"><path d="M9.0 1v16M1 9.0h16" stroke="#1d2b47" stroke-width="2"/></svg>
<span class="t" style="left:2581.2px;top:260.1px;font-size:23px;color:#1d2b47;">Add</span>
<div class="b" style="left:2366.0px;top:321.7px;width:1385.0px;height:2.0px;background:#e9edf3;"></div>
<span class="t" style="left:2366.6px;top:365.3px;font-size:22.5px;color:#1d2b47;letter-spacing:-0.174px;font-weight:700;">Global Filter</span>
<div class="b" style="left:2525.9px;top:349.0px;width:264.0px;height:51.9px;background:#f0f2f5;border-radius:13px;"></div>
<span class="t" style="left:2536.0px;top:364.1px;font-size:23px;color:#1d2b47;letter-spacing:0.177px;">customer_state</span>
<span class="t" style="left:2713.8px;top:364.1px;font-size:23px;color:#1d2b47;">=</span>
<span class="t" style="left:2743.6px;top:364.1px;font-size:23px;color:#1d2b47;">MG</span>
<div class="b" style="left:2801.4px;top:349.0px;width:256.1px;height:51.9px;background:#f0f2f5;border-radius:13px;"></div>
<span class="t" style="left:2812.6px;top:364.1px;font-size:23px;color:#1d2b47;letter-spacing:0.169px;">customer_state</span>
<span class="t" style="left:2990.4px;top:364.1px;font-size:23px;color:#1d2b47;">=</span>
<span class="t" style="left:3019.6px;top:364.1px;font-size:23px;color:#1d2b47;">RJ</span>
<div class="b" style="left:2525.9px;top:413.1px;width:818.6px;height:51.9px;background:#f0f2f5;border-radius:13px;"></div>
<span class="t" style="left:2536.0px;top:428.2px;font-size:23px;color:#1d2b47;letter-spacing:0.129px;">order_purchase_timestamp</span>
<svg class="b" style="left:2834.4px;top:433.0px;" width="20" height="12" viewBox="0 0 20 12"><g fill="none" stroke="#1d2b47" stroke-width="1.500"><path d="M6.500 1.500L1.500 6l5 4.500M13.500 1.500L18.500 6l-5 4.500"/></g><circle cx="10" cy="6" r="1.400" fill="#1d2b47"/><path d="M4 6h12" stroke="#1d2b47" stroke-width="1.200"/></svg>
<span class="t" style="left:2868.6px;top:428.2px;font-size:23px;color:#1d2b47;letter-spacing:0.302px;">2017-01-01 00:00:00 ~ 2017-12-31 23:59:59</span>
<div class="b" style="left:3357.2px;top:413.0px;width:117.0px;height:52.0px;background:#fff;border-radius:13px;border:1.5px solid #e1e5eb;"></div>
<svg class="b" style="left:3379.0px;top:430.0px;" width="18" height="18" viewBox="0 0 18 18"><path d="M9.0 1v16M1 9.0h16" stroke="#1d2b47" stroke-width="2"/></svg>
<span class="t" style="left:3412.2px;top:428.2px;font-size:23px;color:#1d2b47;">Add</span>
<div class="b" style="left:2366.0px;top:490.0px;width:1385.0px;height:2.0px;background:#e9edf3;"></div>
<div class="b" style="left:2366.0px;top:517.0px;width:112.3px;height:52.0px;background:#0969f2;border-radius:13px;"></div>
<span class="t" style="left:2386.7px;top:532.5px;font-size:23px;color:#fff;letter-spacing:-0.442px;-webkit-text-stroke:0.4px #fff;">Search</span>
<span class="t" style="left:2511.9px;top:532.5px;font-size:23px;color:#1366e0;letter-spacing:-0.492px;-webkit-text-stroke:0.3px #1366e0;">Clear</span>
<div class="b" style="left:2325.8px;top:646.0px;width:1463.7px;height:1394.0px;background:#fff;border-radius:13px;border:1px solid #eceff3;"></div>
<div class="b" style="left:2353.4px;top:672.8px;width:1411.6px;height:72.2px;background:#fafbfb;"></div>
<div class="b" style="left:2353.4px;top:745.0px;width:1411.6px;height:1.2px;background:#e4e7ec;"></div>
<span class="t" style="left:2373.0px;top:699.5px;font-size:22.5px;color:#1d2b47;letter-spacing:0.096px;font-weight:700;">Name</span>
<svg class="b" style="left:2451.4px;top:701.0px;" width="16" height="16" viewBox="0 0 16 16"><path d="M1.500 1.800h13l-5 6v6.200l-3-1.500V7.800z" fill="none" stroke="#6b7a90" stroke-width="1.700" stroke-linejoin="round"/></svg>
<svg class="b" style="left:2488.0px;top:699.8px;" width="12" height="18" viewBox="0 0 12 18"><path d="M6 .500v16M1.200 11.700l4.800 5L10.800 11.700" fill="none" stroke="#6b7a90" stroke-width="2.100"/></svg>
<span class="t" style="left:3631.8px;top:699.5px;font-size:22.5px;color:#1d2b47;letter-spacing:-0.005px;font-weight:700;">Quantity</span>
<svg class="b" style="left:3729.7px;top:699.8px;" width="12" height="18" viewBox="0 0 12 18"><path d="M6 .500v16M1.200 11.700l4.800 5L10.800 11.700" fill="none" stroke="#6b7a90" stroke-width="2.100"/></svg>
<span class="t" style="left:2379.0px;top:774.5px;font-size:23px;color:#1366e0;letter-spacing:0.231px;">total_sales_metric</span>
<span class="t" style="left:3626.0px;top:774.5px;font-size:23px;color:#1d2b47;letter-spacing:-0.175px;">2,483,178.2</span>
<div class="b" style="left:2340.0px;top:834.0px;width:95.0px;height:43.0px;background:#fff;border-radius:21.5px;border:1.5px solid #e1e5eb;"></div>
<span class="t" style="left:2362.9px;top:844.4px;font-size:21px;color:#1a2233;letter-spacing:-0.491px;-webkit-text-stroke:0.5px #1a2233;">_type</span>
<div class="b" style="left:2340.0px;top:820.0px;width:32.0px;height:71.0px;background:#fff;"></div>
<div class="b" style="left:2372.0px;top:821.0px;width:18.0px;height:69.0px;background:linear-gradient(90deg,#eceef2,rgba(255,255,255,0));"></div>
<div class="b" style="left:2448.0px;top:834.0px;width:157.7px;height:43.0px;background:#fff;border-radius:21.5px;border:1.5px solid #e1e5eb;"></div>
<span class="t" style="left:2468.8px;top:844.4px;font-size:21px;color:#1a2233;letter-spacing:-0.005px;-webkit-text-stroke:0.5px #1a2233;">order_status</span>
<div class="b" style="left:2619.3px;top:834.0px;width:327.5px;height:43.0px;background:#fff;border-radius:21.5px;border:1.5px solid #e1e5eb;"></div>
<span class="t" style="left:2639.5px;top:844.4px;font-size:21px;color:#1a2233;letter-spacing:-0.038px;-webkit-text-stroke:0.5px #1a2233;">order_purchase_timestamp</span>
<svg class="b" style="left:2911.0px;top:852.0px;" width="12" height="8" viewBox="0 0 12 8"><path d="M1.500 1.500L6 6l4.500-4.500" fill="none" stroke="#1a2233" stroke-width="1.800"/></svg>
<div class="b" style="left:2960.0px;top:834.0px;width:266.0px;height:43.0px;background:#fff;border-radius:21.5px;border:1.5px solid #e1e5eb;"></div>
<span class="t" style="left:2980.0px;top:844.4px;font-size:21px;color:#1a2233;letter-spacing:-0.039px;-webkit-text-stroke:0.5px #1a2233;">product_category_name</span>
<div class="b" style="left:3239.0px;top:834.0px;width:184.7px;height:43.0px;background:#fff;border-radius:21.5px;border:1.5px solid #e1e5eb;"></div>
<span class="t" style="left:3259.7px;top:844.4px;font-size:21px;color:#1a2233;letter-spacing:0.020px;-webkit-text-stroke:0.5px #1a2233;">customer_state</span>
<div class="b" style="left:3436.8px;top:834.0px;width:172.2px;height:43.0px;background:#e6f4fe;border-radius:21.5px;border:1.5px solid #1677e5;"></div>
<span class="t" style="left:3457.5px;top:844.4px;font-size:21px;color:#1366e0;letter-spacing:0.103px;-webkit-text-stroke:0.75px #1366e0;">customer_city</span>
<div class="b" style="left:3648.7px;top:853.7px;width:2.6px;height:2.6px;background:#44536b;border-radius:1.3px;"></div>
<div class="b" style="left:3656.7px;top:853.7px;width:2.6px;height:2.6px;background:#44536b;border-radius:1.3px;"></div>
<div class="b" style="left:3664.7px;top:853.7px;width:2.6px;height:2.6px;background:#44536b;border-radius:1.3px;"></div>
<div class="b" style="left:3695.2px;top:830.3px;width:50.5px;height:49.9px;background:#fff;border-radius:13px;border:1.5px solid #e1e5eb;"></div>
<svg class="b" style="left:3709.3px;top:845.5px;" width="22" height="19" viewBox="0 0 22 19"><g fill="none" stroke="#1d2b47" stroke-width="1.900"><rect x="1.200" y="1.200" width="4.600" height="16.600"/><rect x="8.700" y="1.200" width="4.600" height="16.600"/><rect x="16.200" y="1.200" width="4.600" height="16.600"/></g></svg>
<div class="b" style="left:3581.2px;top:916.0px;width:47.4px;height:44.5px;background:#fff;border-radius:11px;border:1.5px solid #e1e5eb;"></div>
<div class="b" style="left:3641.7px;top:916.0px;width:47.0px;height:44.5px;background:#fff;border-radius:11px;border:1.5px solid #e1e5eb;"></div>
<div class="b" style="left:3700.8px;top:916.0px;width:44.9px;height:44.5px;background:#fff;border-radius:11px;border:1.5px solid #e1e5eb;"></div>
<svg class="b" style="left:3593.3px;top:927.3px;" width="22" height="22" viewBox="0 0 22 22"><circle cx="11" cy="11" r="9.800" fill="#1d2b47"/><path d="M11 11V0M11 11H0M11 11l9.500 6.500" stroke="#fff" stroke-width="1.700" fill="none"/></svg>
<svg class="b" style="left:3654.2px;top:926.3px;" width="22" height="24" viewBox="0 0 22 24"><g fill="none" stroke="#1d2b47" stroke-width="2.500" stroke-linejoin="round"><path d="M11 2l8.500 5v10L11 22l-8.500-5V7z"/><circle cx="11" cy="12" r="3.200"/></g></svg>
<div class="b" style="left:3713.0px;top:935.6px;width:5.4px;height:5.4px;background:#1d2b47;border-radius:1px;"></div>
<div class="b" style="left:3720.5px;top:935.6px;width:5.4px;height:5.4px;background:#1d2b47;border-radius:1px;"></div>
<div class="b" style="left:3728.0px;top:935.6px;width:5.4px;height:5.4px;background:#1d2b47;border-radius:1px;"></div>
<svg class="b" style="left:0;top:0" width="3836" height="1420" viewBox="0 0 3836 1420"><path d="M3060.00 1093.10A132 132 0 1 1 2987.72 1335.55L3016.47 1291.62A79.5 79.5 0 1 0 3060.00 1145.60Z" fill="#0468f7"/><path d="M2987.72 1335.55A132 132 0 0 1 2956.55 1307.09L2997.70 1274.48A79.5 79.5 0 0 0 3016.47 1291.62Z" fill="#05b14f"/><path d="M2956.55 1307.09A132 132 0 0 1 2941.36 1282.96L2988.55 1259.95A79.5 79.5 0 0 0 2997.70 1274.48Z" fill="#fdb528"/><path d="M2941.36 1282.96A132 132 0 0 1 2934.32 1265.45L2984.31 1249.40A79.5 79.5 0 0 0 2988.55 1259.95Z" fill="#fd5d5d"/><path d="M2934.32 1265.45A132 132 0 0 1 2955.42 1144.56L2997.01 1176.59A79.5 79.5 0 0 0 2984.31 1249.40Z" fill="#9177fb"/><path d="M2955.42 1144.56A132 132 0 0 1 2982.97 1117.90L3013.61 1160.54A79.5 79.5 0 0 0 2997.01 1176.59Z" fill="#fe8172"/><path d="M2982.97 1117.90A132 132 0 0 1 3005.26 1104.99L3027.03 1152.76A79.5 79.5 0 0 0 3013.61 1160.54Z" fill="#feaa6c"/><path d="M3005.26 1104.99A132 132 0 0 1 3027.40 1097.19L3040.36 1148.06A79.5 79.5 0 0 0 3027.03 1152.76Z" fill="#27cdd8"/><path d="M3027.40 1097.19A132 132 0 0 1 3043.46 1094.14L3050.04 1146.23A79.5 79.5 0 0 0 3040.36 1148.06Z" fill="#5fb5fd"/><path d="M3043.46 1094.14A132 132 0 0 1 3060.00 1093.10L3060.00 1145.60A79.5 79.5 0 0 0 3050.04 1146.23Z" fill="#ec5578"/><polyline points="3026.8,1068.7 3050.1,1068.7 3051.5,1093.1" fill="none" stroke="#ec5578" stroke-width="1.600"/><polyline points="2967.6,1088.6 2990.9,1088.6 3035.3,1095.2" fill="none" stroke="#5fb5fd" stroke-width="1.600"/><polyline points="2940.5,1108.0 2965.2,1108.0 3016.2,1100.0" fill="none" stroke="#27cdd8" stroke-width="1.600"/><polyline points="2922.2,1127.1 2945.3,1127.1 2992.3,1109.6" fill="none" stroke="#feaa6c" stroke-width="1.600"/><polyline points="2909.4,1147.0 2932.8,1147.0 2968.4,1130.3" fill="none" stroke="#fe8172" stroke-width="1.600"/><polyline points="2890.6,1198.3 2913.9,1198.3 2929.9,1202.5" fill="none" stroke="#9177fb" stroke-width="1.600"/><polyline points="2898.5,1283.5 2922.2,1283.5 2937.8,1274.7" fill="none" stroke="#fd5d5d" stroke-width="1.600"/><polyline points="2909.4,1309.3 2933.0,1309.3 2948.4,1296.2" fill="none" stroke="#fdb528" stroke-width="1.600"/><polyline points="2931.4,1340.9 2955.1,1340.9 2970.5,1324.1" fill="none" stroke="#05b14f" stroke-width="1.600"/><polyline points="3186.9,1262.5 3209.5,1268.9 3233.4,1268.9" fill="none" stroke="#0468f7" stroke-width="1.600"/></svg>
<span class="t" style="left:2896.7px;top:1061.2px;font-size:16.5px;color:#3a465c;letter-spacing:0.057px;">duque de caxias</span>
<span class="t" style="left:2885.2px;top:1080.9px;font-size:16.5px;color:#3a465c;letter-spacing:0.095px;">contagem</span>
<span class="t" style="left:2841.4px;top:1100.0px;font-size:16.5px;color:#3a465c;letter-spacing:0.128px;">sao goncalo</span>
<span class="t" style="left:2823.9px;top:1119.1px;font-size:16.5px;color:#3a465c;letter-spacing:0.018px;">nova iguacu</span>
<span class="t" style="left:2822.3px;top:1139.3px;font-size:16.5px;color:#3a465c;letter-spacing:0.124px;">divinopolis</span>
<span class="t" style="left:2775.8px;top:1190.3px;font-size:16.5px;color:#3a465c;letter-spacing:0.145px;">belo horizonte</span>
<span class="t" style="left:2812.5px;top:1275.8px;font-size:16.5px;color:#3a465c;letter-spacing:-0.049px;">uberlandia</span>
<span class="t" style="left:2816.9px;top:1301.5px;font-size:16.5px;color:#3a465c;letter-spacing:0.265px;">juiz de fora</span>
<span class="t" style="left:2876.2px;top:1332.6px;font-size:16.5px;color:#3a465c;letter-spacing:0.256px;">niteroi</span>
<span class="t" style="left:3241.9px;top:1260.7px;font-size:16.5px;color:#3a465c;letter-spacing:0.218px;">rio de janeiro</span>
<div class="b" style="left:2380.0px;top:1494.6px;width:19.5px;height:13.0px;background:#0468f7;border-radius:3.5px;"></div>
<span class="t" style="left:2407.2px;top:1491.5px;font-size:19.5px;color:#a9adb4;letter-spacing:0.415px;">rio de janeiro</span>
<div class="b" style="left:2541.6px;top:1494.6px;width:19.5px;height:13.0px;background:#05b14f;border-radius:3.5px;"></div>
<span class="t" style="left:2568.8px;top:1491.5px;font-size:19.5px;color:#a9adb4;letter-spacing:0.477px;">niteroi</span>
<div class="b" style="left:2641.0px;top:1494.6px;width:19.5px;height:13.0px;background:#fdb528;border-radius:3.5px;"></div>
<span class="t" style="left:2669.2px;top:1491.5px;font-size:19.5px;color:#a9adb4;letter-spacing:0.460px;">juiz de fora</span>
<div class="b" style="left:2785.8px;top:1494.6px;width:19.5px;height:13.0px;background:#fd5d5d;border-radius:3.5px;"></div>
<span class="t" style="left:2813.0px;top:1491.5px;font-size:19.5px;color:#a9adb4;letter-spacing:0.193px;">uberlandia</span>
<div class="b" style="left:2921.6px;top:1494.6px;width:19.5px;height:13.0px;background:#9177fb;border-radius:3.5px;"></div>
<span class="t" style="left:2948.8px;top:1491.5px;font-size:19.5px;color:#a9adb4;letter-spacing:0.365px;">belo horizonte</span>
<div class="b" style="left:3091.6px;top:1494.6px;width:19.5px;height:13.0px;background:#fe8172;border-radius:3.5px;"></div>
<span class="t" style="left:3119.4px;top:1491.5px;font-size:19.5px;color:#a9adb4;letter-spacing:0.284px;">divinopolis</span>
<div class="b" style="left:3229.4px;top:1494.6px;width:19.5px;height:13.0px;background:#feaa6c;border-radius:3.5px;"></div>
<span class="t" style="left:3256.7px;top:1491.5px;font-size:19.5px;color:#a9adb4;letter-spacing:0.280px;">nova iguacu</span>
<div class="b" style="left:3380.3px;top:1494.6px;width:19.5px;height:13.0px;background:#27cdd8;border-radius:3.5px;"></div>
<span class="t" style="left:3407.6px;top:1491.5px;font-size:19.5px;color:#a9adb4;letter-spacing:0.320px;">sao goncalo</span>
<div class="b" style="left:3532.2px;top:1494.6px;width:19.5px;height:13.0px;background:#5fb5fd;border-radius:3.5px;"></div>
<div class="b" style="left:3555px;top:1485px;width:75.5px;height:34px;overflow:hidden">
<span class="t" style="left:4.5px;top:6.5px;font-size:19.5px;color:#a9adb4;letter-spacing:0.342px;">contagem</span>
</div>
<svg class="b" style="left:3645.8px;top:1488.8px;" width="16" height="25" viewBox="0 0 16 25"><path d="M15.500 .500v24L.800 12.500z" fill="#a9adb3"/></svg>
<span class="t" style="left:3678.0px;top:1491.6px;font-size:20.5px;color:#3a465c;">1/2</span>
<svg class="b" style="left:3724.0px;top:1488.8px;" width="16" height="25" viewBox="0 0 16 25"><path d="M.500 .500v24L15.200 12.500z" fill="#2a3950"/></svg>
<span class="t" style="left:2398.2px;top:1562.8px;font-size:23px;color:#1366e0;letter-spacing:0.058px;">rio de janeiro</span>
<span class="t" style="left:3628.7px;top:1563.0px;font-size:22.8px;color:#1d2b47;letter-spacing:0.100px;">820,506.14</span>
<span class="t" style="left:2398.2px;top:1636.5px;font-size:23px;color:#1366e0;letter-spacing:0.220px;">belo horizonte</span>
<span class="t" style="left:3628.7px;top:1636.6px;font-size:22.8px;color:#1d2b47;letter-spacing:0.100px;">214,617.27</span>
<span class="t" style="left:2398.2px;top:1710.1px;font-size:23px;color:#1366e0;letter-spacing:0.238px;">niteroi</span>
<span class="t" style="left:3641.4px;top:1710.3px;font-size:22.8px;color:#1d2b47;letter-spacing:0.100px;">70,163.98</span>
<span class="t" style="left:2398.2px;top:1783.8px;font-size:23px;color:#1366e0;letter-spacing:0.209px;">divinopolis</span>
<span class="t" style="left:3641.4px;top:1783.9px;font-size:22.8px;color:#1d2b47;letter-spacing:0.100px;">63,947.91</span>
<span class="t" style="left:2398.8px;top:1857.4px;font-size:23px;color:#1366e0;letter-spacing:0.031px;">juiz de fora</span>
<span class="t" style="left:3641.4px;top:1857.6px;font-size:22.8px;color:#1d2b47;letter-spacing:0.100px;">47,649.85</span>
<span class="t" style="left:2398.2px;top:1931.1px;font-size:23px;color:#1366e0;letter-spacing:-0.128px;">nova iguacu</span>
<span class="t" style="left:3641.4px;top:1931.2px;font-size:22.8px;color:#1d2b47;letter-spacing:0.100px;">42,532.71</span>
<span class="t" style="left:2398.2px;top:2004.7px;font-size:23px;color:#1366e0;letter-spacing:-0.028px;">sao goncalo</span>
<span class="t" style="left:3641.4px;top:2004.9px;font-size:22.8px;color:#1d2b47;letter-spacing:0.100px;">38,774.22</span>
<svg class="b" style="left:0;top:83px;pointer-events:none" width="3836" height="1937" viewBox="0 83 3836 1937"><defs><pattern id="wm" x="-93.0" y="117.0" width="328.6" height="240" patternUnits="userSpaceOnUse"><text x="164.3" y="128.0" text-anchor="middle" transform="rotate(-20 164.3 120.0)" font-family="Liberation Sans,sans-serif" font-size="23" fill="#000" fill-opacity=".042">lhdata</text></pattern></defs><rect x="104" y="83" width="3732" height="1937" fill="url(#wm)"/></svg>
<svg class="b" style="left:0;top:1996px" width="24" height="24" viewBox="0 0 24 24"><path d="M0 0v24h24A24 24 0 0 1 0 0z" fill="#10190b"/></svg>
<svg class="b" style="left:3812px;top:1996px" width="24" height="24" viewBox="0 0 24 24"><path d="M24 0v24H0A24 24 0 0 0 24 0z" fill="#10190b"/></svg>
</body></html>
